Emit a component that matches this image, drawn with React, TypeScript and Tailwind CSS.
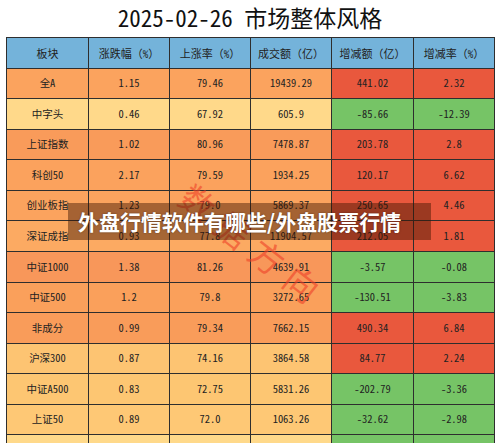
import React from "react";

const RED = "bg-[#E9583D]";
const GREEN = "bg-[#76C466]";

type Row = {
  cells: string[];
  base: string;
  inc: string;
  h: string;
};

const rows: Row[] = [
  { cells: ["全A", "1.15", "79.46", "19439.29", "441.02", "2.32"], base: "bg-[#FBA35E]", inc: RED, h: "h-[30px]" },
  { cells: ["中字头", "0.46", "67.92", "605.9", "-85.66", "-12.39"], base: "bg-[#FFD98A]", inc: GREEN, h: "h-[31px]" },
  { cells: ["上证指数", "1.02", "80.96", "7478.87", "203.78", "2.8"], base: "bg-[#F99B5A]", inc: RED, h: "h-[30px]" },
  { cells: ["科创50", "2.17", "79.59", "1934.25", "120.17", "6.62"], base: "bg-[#FBA25D]", inc: RED, h: "h-[31px]" },
  { cells: ["创业板指", "1.23", "79.0", "5869.37", "250.65", "4.46"], base: "bg-[#FBA35E]", inc: RED, h: "h-[30px]" },
  { cells: ["深证成指", "0.93", "77.8", "11904.57", "212.05", "1.81"], base: "bg-[#FCAA62]", inc: RED, h: "h-[31px]" },
  { cells: ["中证1000", "1.38", "81.26", "4639.91", "-3.57", "-0.08"], base: "bg-[#F8975A]", inc: GREEN, h: "h-[31px]" },
  { cells: ["中证500", "1.2", "79.8", "3272.65", "-130.51", "-3.83"], base: "bg-[#FAA05B]", inc: GREEN, h: "h-[30px]" },
  { cells: ["非成分", "0.99", "79.34", "7662.15", "490.34", "6.84"], base: "bg-[#F99C5A]", inc: RED, h: "h-[31px]" },
  { cells: ["沪深300", "0.87", "74.16", "3864.58", "84.77", "2.24"], base: "bg-[#FDC472]", inc: RED, h: "h-[30px]" },
  { cells: ["中证A500", "0.83", "72.75", "5831.26", "-202.79", "-3.36"], base: "bg-[#FDC672]", inc: GREEN, h: "h-[31px]" },
  { cells: ["上证50", "0.89", "72.0", "1063.26", "-32.62", "-2.98"], base: "bg-[#FEC875]", inc: GREEN, h: "h-[30px]" },
  { cells: ["", "", "", "", "", ""], base: "bg-[#FFD98A]", inc: GREEN, h: "h-[31px]" },
];

const headers = ["板块", "涨跌幅（%）", "上涨率（%）", "成交额（亿）", "增减额（亿）", "增减率（%）"];

const GRID = "grid grid-cols-[82px_81px_81px_81px_82px_81px]";
const FONT = "font-['Noto_Sans_Mono_CJK_SC','Noto_Sans_CJK_SC',monospace]";

export default function App() {
  return (
    <div className={`relative w-[500px] h-[443px] overflow-hidden bg-white text-[#222] ${FONT}`}>
      <div className="h-[37px] flex items-center justify-center pb-[3px] text-[23px] leading-none text-[#111]">
        2025-02-26 市场整体风格
      </div>
      <div className="ml-[6px] w-[489px] border-l border-t border-[#2e2e2e]">
        <div className={GRID}>
          {headers.map((h, i) => (
            <div
              key={i}
              className="h-[31px] bg-[#74B3DA] border-r border-b border-[#2e2e2e] flex items-center justify-center text-[11px] leading-none"
            >
              {h}
            </div>
          ))}
        </div>
        {rows.map((r, ri) => (
          <div key={ri} className={GRID}>
            {r.cells.map((c, ci) => (
              <div
                key={ci}
                className={`${r.h} ${ci < 4 ? r.base : r.inc} border-r border-b border-[#2e2e2e] flex items-center justify-center text-[10.5px] leading-none`}
              >
                {c}
              </div>
            ))}
          </div>
        ))}
      </div>

      <div className="absolute left-[254px] top-[246px] -translate-x-1/2 -translate-y-1/2 rotate-[38deg] whitespace-nowrap text-[34px] leading-none tracking-[10px] text-[rgba(238,65,40,0.6)] font-['Noto_Sans_CJK_SC',sans-serif] font-normal">
        数据方向
      </div>

      <div className="absolute left-[68px] top-[203px] w-[363px] h-[37px] bg-[rgba(60,20,0,0.45)] flex items-center pl-[10px] text-white text-[21px] font-bold leading-none font-['Noto_Sans_CJK_SC',sans-serif] [text-shadow:0_0_2px_rgba(0,0,0,0.4)]">
        外盘行情软件有哪些/外盘股票行情
      </div>
    </div>
  );
}
